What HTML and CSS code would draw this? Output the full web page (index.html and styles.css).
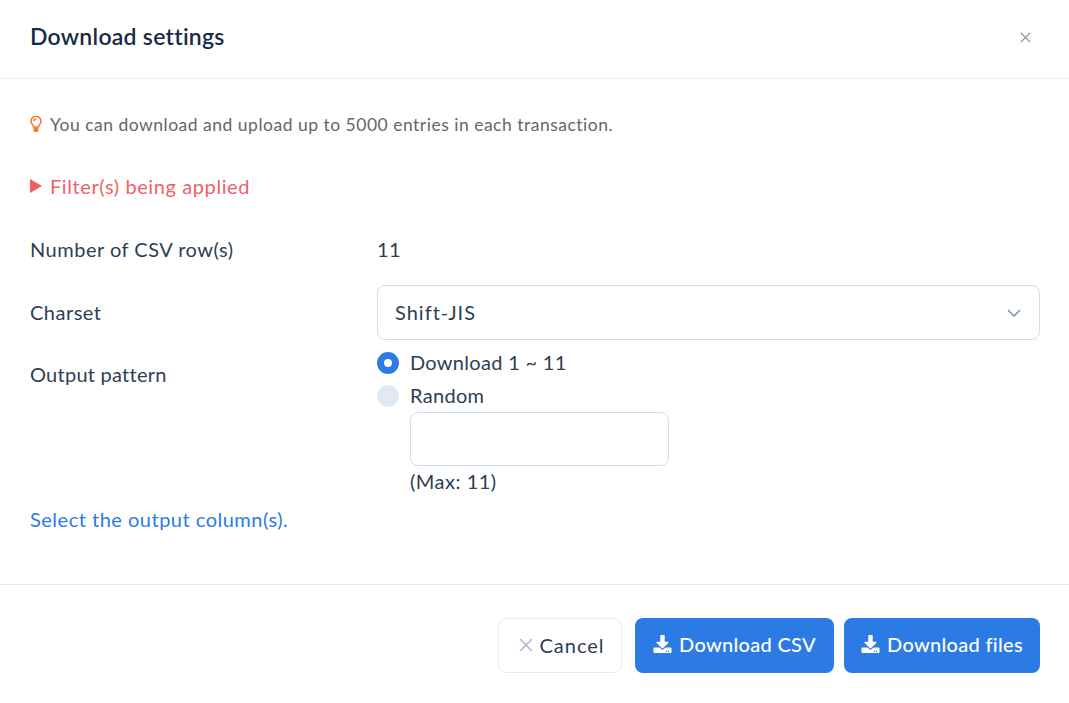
FILE: index.html
```html
<!DOCTYPE html>
<html>
<head>
    <title>Download settings</title>
    <link rel="stylesheet" href="styles.css">
</head>
<body>
    <div class="modal">
        <div class="modal-header">
            <h2 class="modal-title">Download settings</h2>
            <svg class="close-icon" viewBox="0 0 12 12"><path d="M1 1l10 10M11 1L1 11"/></svg>
        </div>
        <div class="modal-body">
            <p class="hint">
                <svg class="bulb-icon" viewBox="0 0 12 17"><path class="bulb-glass" d="M3.6 11C3.4 8.9 1 8 1 5.3a5 5 0 0 1 10 0C11 8 8.6 8.9 8.4 11z"/><path class="bulb-glow" d="M3.7 5.2A2.4 2.4 0 0 1 6 3"/><path class="bulb-base" d="M3.6 11.6h4.8v2.6A2 2 0 0 1 6.9 16H5.1a2 2 0 0 1-1.5-1.8z"/></svg>
                You can download and upload up to 5000 entries in each transaction.
            </p>
            <div class="filter-toggle"><span class="arrow"></span>Filter(s) being applied</div>
            <div class="form-row row-count">
                <div class="form-label">Number of CSV row(s)</div>
                <div>11</div>
            </div>
            <div class="form-row row-charset">
                <div class="form-label charset-label">Charset</div>
                <div class="select">
                    <span class="select-value">Shift-JIS</span>
                    <svg class="chevron" viewBox="0 0 14 8"><path d="M1 1l6 6 6-6"/></svg>
                </div>
            </div>
            <div class="form-row row-pattern">
                <div class="form-label pattern-label">Output pattern</div>
                <div>
                    <div class="radio-row"><span class="radio radio-on"></span>Download 1 ~ 11</div>
                    <div class="radio-row"><span class="radio"></span>Random</div>
                    <div class="random-box">
                        <div class="text-input"></div>
                        <div class="max-note">(Max: 11)</div>
                    </div>
                </div>
            </div>
            <a class="column-link">Select the output column(s).</a>
        </div>
        <div class="modal-footer">
            <button class="btn btn-cancel">
                <svg class="cancel-icon" viewBox="0 0 12 12"><path d="M1 1l10 10M11 1L1 11"/></svg>Cancel
            </button>
            <button class="btn btn-primary btn-csv">
                <svg class="dl-icon" viewBox="0 0 512 512"><path d="M216 0h80c13.3 0 24 10.7 24 24v168h87.7c17.8 0 26.7 21.5 14.1 34.1L269.7 378.3c-7.5 7.5-19.8 7.5-27.3 0L90.1 226.1c-12.6-12.6-3.7-34.1 14.1-34.1H192V24c0-13.3 10.7-24 24-24zm296 376v112c0 13.3-10.7 24-24 24H24c-13.3 0-24-10.7-24-24V376c0-13.3 10.7-24 24-24h146.7l49 49c20.1 20.1 52.5 20.1 72.6 0l49-49H488c13.3 0 24 10.7 24 24zm-124 88c0-11-9-20-20-20s-20 9-20 20 9 20 20 20 20-9 20-20zm64 0c0-11-9-20-20-20s-20 9-20 20 9 20 20 20 20-9 20-20z"/></svg>Download CSV
            </button>
            <button class="btn btn-primary btn-files">
                <svg class="dl-icon" viewBox="0 0 512 512"><path d="M216 0h80c13.3 0 24 10.7 24 24v168h87.7c17.8 0 26.7 21.5 14.1 34.1L269.7 378.3c-7.5 7.5-19.8 7.5-27.3 0L90.1 226.1c-12.6-12.6-3.7-34.1 14.1-34.1H192V24c0-13.3 10.7-24 24-24zm296 376v112c0 13.3-10.7 24-24 24H24c-13.3 0-24-10.7-24-24V376c0-13.3 10.7-24 24-24h146.7l49 49c20.1 20.1 52.5 20.1 72.6 0l49-49H488c13.3 0 24 10.7 24 24zm-124 88c0-11-9-20-20-20s-20 9-20 20 9 20 20 20 20-9 20-20zm64 0c0-11-9-20-20-20s-20 9-20 20 9 20 20 20 20-9 20-20z"/></svg>Download files
            </button>
        </div>
    </div>
</body>
</html>
```

FILE: styles.css
```css
body {
    margin: 0;
    background: #fff;
    color: #2d3e56;
    font-family: "Lato", "Noto Sans", sans-serif;
    font-size: 20px;
    line-height: 24px;
    letter-spacing: 0.5px;
}
.modal-header {
    height: 75px;
    padding: 0 38px 3px 30px;
    display: flex;
    align-items: center;
    justify-content: space-between;
    border-bottom: 1px solid #e6eef6;
}
.modal-title {
    margin: 0 0 4px;
    font-size: 23px;
    font-weight: 600;
    color: #1a2b47;
    letter-spacing: 0.27px;
}
.close-icon {
    width: 11px;
    height: 11px;
    fill: none;
    stroke: #7f8c9f;
    stroke-width: 1.3;
}
.modal-body {
    padding: 34px 29px 53px 30px;
}
.hint {
    margin: 0;
    display: flex;
    align-items: center;
    gap: 8px;
    color: #666;
    font-size: 17.5px;
}
.bulb-icon {
    width: 12px;
    height: 17px;
    margin-top: -2px;
}
.bulb-glass, .bulb-glow {
    fill: none;
    stroke: #f9772e;
    stroke-width: 1.5;
}
.bulb-base {
    fill: #f9772e;
}
.filter-toggle {
    margin-top: 37px;
    display: flex;
    align-items: center;
    color: #ef5f67;
    letter-spacing: 0.6px;
}
.arrow {
    width: 0;
    height: 0;
    margin-right: 8px;
    border-left: 12px solid #ef5f67;
    border-top: 7px solid transparent;
    border-bottom: 7px solid transparent;
}
.form-row {
    display: grid;
    grid-template-columns: 347px 1fr;
    align-items: center;
}
.row-count {
    margin-top: 39px;
}
.row-charset {
    margin-top: 24px;
}
.charset-label {
    padding-bottom: 2px;
}
.row-pattern {
    margin-top: 6px;
    align-items: start;
}
.pattern-label {
    padding-top: 16px;
    letter-spacing: 0.25px;
}
.select {
    height: 55px;
    box-sizing: border-box;
    padding: 0 18px 0 17px;
    display: flex;
    align-items: center;
    justify-content: space-between;
    border: 1px solid #d3deeb;
    border-radius: 8px;
}
.select-value {
    padding-bottom: 2px;
    letter-spacing: 1px;
}
.chevron {
    width: 14px;
    height: 8px;
    fill: none;
    stroke: #7f96b8;
    stroke-width: 1.6;
}
.radio-row {
    height: 33px;
    box-sizing: border-box;
    padding-bottom: 2px;
    display: flex;
    align-items: center;
    gap: 11px;
    letter-spacing: 0.3px;
}
.radio {
    width: 22px;
    height: 22px;
    margin-top: 2px;
    box-sizing: border-box;
    border-radius: 50%;
    background: #e1e9f4;
}
.radio-on {
    background: #fff;
    border: 7px solid #2c7be5;
}
.random-box {
    margin-left: 33px;
}
.text-input {
    width: 259px;
    height: 54px;
    box-sizing: border-box;
    border: 1px solid #d3deeb;
    border-radius: 8px;
}
.max-note {
    margin-top: 3px;
}
.column-link {
    display: block;
    margin-top: 14px;
    color: #2c7be5;
}
.modal-footer {
    padding: 33px 29px 30px 30px;
    display: flex;
    justify-content: flex-end;
    border-top: 1px solid #e0e9f2;
}
.btn {
    height: 55px;
    box-sizing: border-box;
    display: flex;
    align-items: center;
    justify-content: center;
    border-radius: 8px;
    font: inherit;
}
.btn-cancel {
    width: 124px;
    padding: 0 0 2px 4px;
    background: #fff;
    color: #2d3e56;
    border: 1px solid #e3ebf6;
    letter-spacing: 1px;
}
.cancel-icon {
    width: 14px;
    height: 14px;
    margin-right: 6px;
    fill: none;
    stroke: #b4c0d3;
    stroke-width: 1.4;
}
.btn-primary {
    padding: 0 0 3px;
    background: #2c7be5;
    color: #fff;
    border: none;
    font-weight: 500;
    letter-spacing: 0.3px;
}
.btn-csv {
    width: 199px;
    margin-left: 13px;
}
.btn-files {
    width: 196px;
    margin-left: 10px;
}
.dl-icon {
    width: 19px;
    height: 18px;
    margin-right: 7px;
    margin-top: -1px;
    fill: #fff;
}
```
